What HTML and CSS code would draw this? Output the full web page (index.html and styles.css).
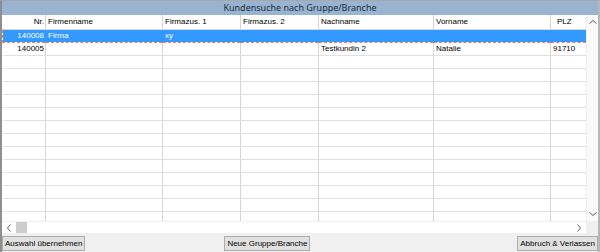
FILE: index.html
```html
<!DOCTYPE html>
<html lang="de">
<head>
  <meta charset="UTF-8">
  <title>Kundensuche nach Gruppe/Branche</title>
  <link rel="stylesheet" href="styles.css">
</head>
<body>
  <div class="window">
    <div class="title">Kundensuche nach Gruppe/Branche</div>
    <div class="grid">
      <div class="grid-main">
        <div class="table-wrap">
          <table class="list">
            <colgroup>
              <col style="width:43px">
              <col style="width:117px">
              <col style="width:78px">
              <col style="width:78px">
              <col style="width:115px">
              <col style="width:117px">
              <col style="width:36px">
            </colgroup>
            <thead>
              <tr>
                <th class="num">Nr.</th>
                <th>Firmenname</th>
                <th>Firmazus. 1</th>
                <th>Firmazus. 2</th>
                <th>Nachname</th>
                <th>Vorname</th>
                <th class="plz">PLZ</th>
              </tr>
            </thead>
            <tbody>
              <tr class="selected">
                <td class="num">140008</td><td>Firma</td><td>xy</td><td></td><td></td><td></td><td></td>
              </tr>
              <tr>
                <td class="num">140005</td><td></td><td></td><td></td><td>Testkundin 2</td><td>Natalie</td><td>91710</td>
              </tr>
              <tr><td></td><td></td><td></td><td></td><td></td><td></td><td></td></tr>
              <tr><td></td><td></td><td></td><td></td><td></td><td></td><td></td></tr>
              <tr><td></td><td></td><td></td><td></td><td></td><td></td><td></td></tr>
              <tr><td></td><td></td><td></td><td></td><td></td><td></td><td></td></tr>
              <tr><td></td><td></td><td></td><td></td><td></td><td></td><td></td></tr>
              <tr><td></td><td></td><td></td><td></td><td></td><td></td><td></td></tr>
              <tr><td></td><td></td><td></td><td></td><td></td><td></td><td></td></tr>
              <tr><td></td><td></td><td></td><td></td><td></td><td></td><td></td></tr>
              <tr><td></td><td></td><td></td><td></td><td></td><td></td><td></td></tr>
              <tr><td></td><td></td><td></td><td></td><td></td><td></td><td></td></tr>
              <tr><td></td><td></td><td></td><td></td><td></td><td></td><td></td></tr>
              <tr><td></td><td></td><td></td><td></td><td></td><td></td><td></td></tr>
              <tr><td></td><td></td><td></td><td></td><td></td><td></td><td></td></tr>
              <tr><td></td><td></td><td></td><td></td><td></td><td></td><td></td></tr>
            </tbody>
          </table>
        </div>
        <div class="hscroll">
          <div class="arrow-btn">
            <svg width="6" height="8" viewBox="0 0 6 8"><polyline points="4.5,0.5 1.5,4 4.5,7.5" fill="none" stroke="#606060" stroke-width="1"/></svg>
          </div>
          <div class="hthumb"></div>
          <div class="htrack"></div>
          <div class="arrow-btn">
            <svg width="6" height="8" viewBox="0 0 6 8"><polyline points="1.5,0.5 4.5,4 1.5,7.5" fill="none" stroke="#606060" stroke-width="1"/></svg>
          </div>
        </div>
      </div>
      <div class="vscroll">
        <div class="varrow">
          <svg width="8" height="6" viewBox="0 0 8 6"><polyline points="0.5,4.5 4,1.5 7.5,4.5" fill="none" stroke="#606060" stroke-width="1"/></svg>
        </div>
        <div class="vtrack"></div>
        <div class="varrow">
          <svg width="8" height="6" viewBox="0 0 8 6"><polyline points="0.5,1.5 4,4.5 7.5,1.5" fill="none" stroke="#606060" stroke-width="1"/></svg>
        </div>
        <div class="corner"></div>
      </div>
    </div>
    <div class="buttons">
      <button class="btn">Auswahl übernehmen</button>
      <button class="btn btn-mid">Neue Gruppe/Branche</button>
      <button class="btn btn-right">Abbruch &amp; Verlassen</button>
    </div>
  </div>
</body>
</html>
```

FILE: styles.css
```css
body {
  margin: 0;
  padding: 0;
  background: #f0f0f0;
  font-family: "Liberation Sans", Arial, sans-serif;
  font-size: 8px;
  color: #000;
}

.window {
  width: 600px;
  height: 252px;
  box-sizing: border-box;
  border-top: 1px solid #a8a8a8;
  border-left: 2px solid #8e8e8e;
  border-right: 2px solid #b8b8b8;
  display: flex;
  flex-direction: column;
  overflow: hidden;
}

.title {
  height: 14px;
  line-height: 14px;
  background: #99b4d1;
  text-align: center;
  font-family: "Noto Sans", sans-serif;
  font-size: 9px;
  color: #1c2c44;
}

.grid {
  height: 218px;
  display: flex;
  background: #fff;
}

.grid-main {
  width: 584px;
  display: flex;
  flex-direction: column;
}

.table-wrap {
  flex: 1;
  overflow: hidden;
}

.list {
  table-layout: fixed;
  border-collapse: collapse;
  width: 584px;
}

.list th,
.list td {
  height: 12px;
  padding: 0 2px;
  border-right: 1px solid #d4d4d4;
  border-bottom: 1px solid #e0e0e0;
  text-align: left;
  font-weight: normal;
  white-space: nowrap;
  overflow: hidden;
  line-height: 12px;
}

.list th {
  height: 14px;
  line-height: 14px;
  border-bottom: 1px solid #d8d8d8;
}

.list .num {
  text-align: right;
  padding-right: 1px;
}

.list th.plz {
  padding-left: 6px;
}

.list tr.selected td {
  background: #3399ff;
  color: #fff;
  border-top: 1px dashed #f07a5a;
  border-bottom: 1px dashed #f07a5a;
  border-right-color: #3399ff;
}

.list tr.selected td:first-child {
  border-left: 1px dashed #f07a5a;
}

.hscroll {
  height: 11px;
  display: flex;
  background: #fff;
  border-top: 1px solid #f0f0f0;
}

.arrow-btn {
  width: 14px;
  display: flex;
  align-items: center;
  justify-content: center;
}

.hthumb {
  width: 11px;
  background: #cdcdcd;
}

.htrack {
  flex: 1;
}

.vscroll {
  width: 12px;
  display: flex;
  flex-direction: column;
  background: #fafafa;
  border-left: 1px solid #f0f0f0;
}

.varrow {
  height: 14px;
  display: flex;
  align-items: center;
  justify-content: center;
}

.vtrack {
  flex: 1;
}

.corner {
  height: 12px;
  background: #f0f0f0;
}

.buttons {
  flex: 1;
  display: flex;
  align-items: flex-end;
  padding: 0 0 1px 0;
}

.btn {
  height: 15px;
  padding: 0 2px;
  margin: 0;
  border: 1px solid #adadad;
  background: #e1e1e1;
  font-family: "Liberation Sans", Arial, sans-serif;
  font-size: 8px;
  color: #000;
  line-height: 13px;
}

.btn-mid {
  margin-left: 139px;
}

.btn-right {
  margin-left: auto;
}
```
